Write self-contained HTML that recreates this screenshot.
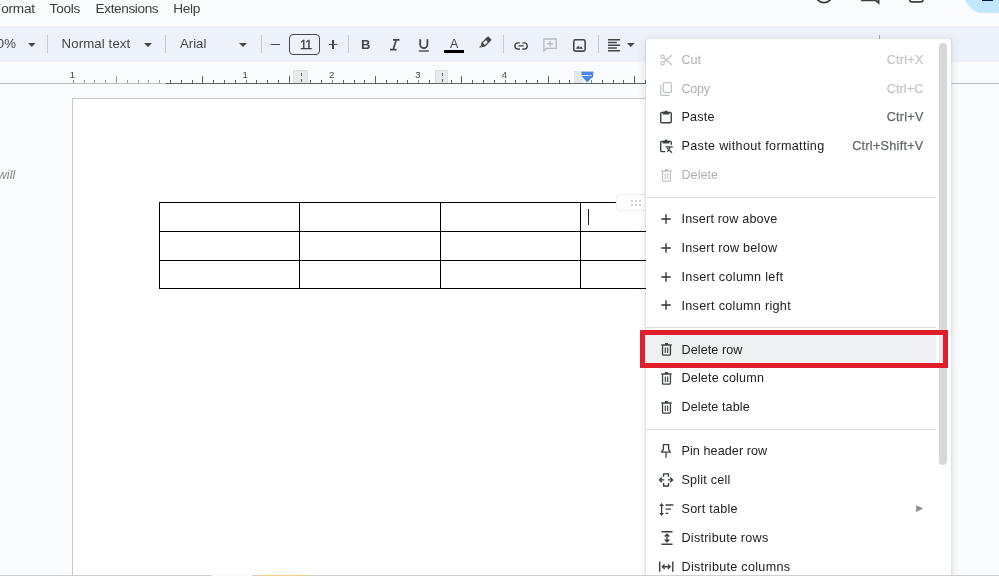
<!DOCTYPE html>
<html lang="en"><head><meta charset="utf-8"><title>Document</title>
<style>
*{margin:0;padding:0;box-sizing:border-box}
html,body{width:999px;height:576px;overflow:hidden;background:#f9fbfd;font-family:"Liberation Sans",Arial,sans-serif;}
body{position:relative}
.abs{position:absolute}
.t{position:absolute;white-space:nowrap;line-height:1}
.mb{font-size:13.6px;color:#3c4043;top:2.2px;letter-spacing:-0.25px}
.tb{font-size:13.2px;color:#444746;top:37.2px}
.sep{position:absolute;top:35px;width:1px;height:18px;background:#c7cad0}
.mi{position:absolute;left:681.5px;font-size:12.6px;color:#202124;white-space:nowrap;line-height:16px;height:16px}
.mi.dis{color:#adb0b3}
.sc{position:absolute;font-size:12.6px;color:#63676c;white-space:nowrap;line-height:16px;height:16px;text-align:left;-webkit-text-stroke:0.25px #63676c}
.sc.dis{color:#c2c4c6;-webkit-text-stroke:0.2px #c2c4c6}
.msep{position:absolute;left:646px;width:290px;height:1px;background:#dadce0}
svg{position:absolute;overflow:visible}
</style></head>
<body>
<div id="w" style="position:absolute;left:0;top:0;width:999px;height:576px;will-change:transform;overflow:hidden">
<div class="abs" style="left:0;top:0;width:999px;height:26px;background:#f9fbfd"></div>
<div class="t mb" style="left:-7.6px"><span style="letter-spacing:0.55px">F</span>ormat</div>
<div class="t mb" style="left:49.6px">Tools</div>
<div class="t mb" style="left:95.6px;letter-spacing:-0.38px">Extensions</div>
<div class="t mb" style="left:173.2px">Help</div>
<svg width="30" height="12" style="left:809px;top:0" viewBox="809 0 30 12"><circle cx="824" cy="-6" r="8.6" fill="none" stroke="#3c4043" stroke-width="1.8"/></svg>
<svg width="30" height="12" style="left:855px;top:0" viewBox="855 0 30 12"><path d="M862 -10 H878.6 V2.8 L875.4 0.3 H862 Z" fill="none" stroke="#3c4043" stroke-width="1.8"/></svg>
<svg width="30" height="12" style="left:902px;top:0" viewBox="902 0 30 12"><rect x="909.8" y="-12" width="13" height="13.8" rx="1.5" fill="none" stroke="#3c4043" stroke-width="1.8"/></svg>
<div class="abs" style="left:964px;top:-27.5px;width:80px;height:40px;border-radius:20px;background:#c2e7ff"></div>
<div class="abs" style="left:982.2px;top:-3px;width:11px;height:4.2px;background:#0b1d33"></div>
<div class="abs" style="left:-30px;top:26px;width:1060px;height:36px;background:#edf2fa"></div>
<div class="t tb" style="left:-10.5px">00%</div>
<svg width="7.6" height="3.9" style="left:27.7px;top:42.8px" viewBox="0 0 7.6 3.9"><path d="M0 0 H7.6 L3.8 3.9 Z" fill="#444746"/></svg>
<div class="sep" style="left:47px"></div>
<div class="t tb" style="left:61.6px;letter-spacing:0.12px">Normal text</div>
<svg width="8" height="4" style="left:144.3px;top:42.8px" viewBox="0 0 8 4"><path d="M0 0 H8 L4.0 4 Z" fill="#444746"/></svg>
<div class="sep" style="left:165px"></div>
<div class="t tb" style="left:180px">Arial</div>
<svg width="8" height="4" style="left:238.8px;top:42.8px" viewBox="0 0 8 4"><path d="M0 0 H8 L4.0 4 Z" fill="#444746"/></svg>
<div class="sep" style="left:261px"></div>
<div class="abs" style="left:270.8px;top:43.6px;width:9.4px;height:1.9px;background:#444746"></div>
<div class="abs" style="left:289px;top:34px;width:31px;height:20.5px;border:1.2px solid #444746;border-radius:4px"></div>
<div class="t" style="left:289px;width:31px;text-align:center;top:38.6px;font-size:12.4px;color:#3c4043;letter-spacing:-0.9px;text-indent:2.2px;-webkit-text-stroke:0.3px #3c4043">11</div>
<div class="abs" style="left:328.6px;top:43.8px;width:8.8px;height:1.7px;background:#444746"></div>
<div class="abs" style="left:332.15px;top:40.2px;width:1.7px;height:8.8px;background:#444746"></div>
<div class="sep" style="left:348px"></div>
<div class="t" style="left:361px;top:38px;font-size:13px;font-weight:bold;color:#444746">B</div>
<svg width="12" height="12" style="left:389px;top:39px" viewBox="0 0 12 12"><path d="M4 0.8 H10.5 M1 10.6 H7.5 M7.3 0.8 L4.2 10.6" fill="none" stroke="#444746" stroke-width="1.7"/></svg>
<svg width="12" height="14" style="left:418px;top:38.5px" viewBox="0 0 12 14"><path d="M2.2 0.3 V5.5 a3.6 3.6 0 0 0 7.2 0 V0.3" fill="none" stroke="#444746" stroke-width="1.8"/><path d="M0.8 12 H10.8" stroke="#444746" stroke-width="1.4"/></svg>
<div class="t" style="left:450.1px;top:37.7px;font-size:12.4px;color:#444746">A</div>
<div class="abs" style="left:443.5px;top:49.6px;width:20px;height:3px;background:#000"></div>
<svg width="14" height="14" style="left:477.7px;top:35.6px" viewBox="0 0 14 14"><g transform="translate(7 6.9) rotate(45) scale(0.96)" fill="#444746"><rect x="-2.7" y="-7.3" width="5.4" height="4.2" rx="0.9"/><rect x="-2.05" y="-3.4" width="4.1" height="5.6" fill="none" stroke="#444746" stroke-width="1.3"/><path d="M-2.7 2.4 H2.7 L1.3 5 H-1.3 Z"/><path d="M-1.3 5.4 H1.3 L-1.3 7.6 Z"/></g></svg>
<div class="sep" style="left:503px"></div>
<svg width="14.2" height="7.9" style="left:513.7px;top:41.7px" viewBox="0 0 16 9"><path d="M6.6 1 H4.4 a3.45 3.45 0 0 0 0 6.9 H6.6 M9.4 1 H11.6 a3.45 3.45 0 0 1 0 6.9 H9.4 M5 4.45 H11" fill="none" stroke="#444746" stroke-width="1.6"/></svg>
<svg width="16" height="15" style="left:542px;top:37.9px" viewBox="0 0 16 15"><path d="M1.9 1 H14.3 V10.4 H4.6 L1.9 12.9 Z" fill="none" stroke="#b7bbc2" stroke-width="1.4"/><path d="M8.1 3 V8.6 M5.3 5.8 H10.9" stroke="#b7bbc2" stroke-width="1.4"/></svg>
<svg width="12.9" height="12.9" style="left:573.2px;top:38.7px" viewBox="0 0 14 14"><rect x="0.85" y="0.85" width="12.3" height="12.3" rx="1.8" fill="none" stroke="#444746" stroke-width="1.7"/><path d="M3 10.6 L5.6 7.4 L7.4 9.4 L8.8 7.8 L11 10.6 Z" fill="#444746"/></svg>
<div class="sep" style="left:598px"></div>
<svg width="13" height="13" style="left:608.1px;top:38.7px" viewBox="0 0 13 13"><path d="M0 0.7 H12.1 M0 3.45 H8.8 M0 6.2 H12.1 M0 8.95 H8.8 M0 11.7 H12.1" stroke="#444746" stroke-width="1.35"/></svg>
<svg width="7.6" height="3.9" style="left:626.7px;top:43.1px" viewBox="0 0 7.6 3.9"><path d="M0 0 H7.6 L3.8 3.9 Z" fill="#444746"/></svg>
<div class="abs" style="left:879px;top:35px;width:1px;height:10px;background:#a0a4aa"></div>
<div class="abs" style="left:0;top:62px;width:999px;height:21px;background:#f9fbfd"></div>
<div class="abs" style="left:0;top:82.5px;width:999px;height:1px;background:#bcbec2"></div>
<div class="abs" style="left:166px;top:82.5px;width:600px;height:1px;background:#5f6368"></div>
<div class="abs" style="left:83.6px;top:79.8px;width:1px;height:2.8px;background:#9aa0a6"></div><div class="abs" style="left:94.4px;top:79.8px;width:1px;height:2.8px;background:#9aa0a6"></div><div class="abs" style="left:105.2px;top:79.8px;width:1px;height:2.8px;background:#9aa0a6"></div><div class="abs" style="left:116.0px;top:76.1px;width:1px;height:6.5px;background:#9aa0a6"></div><div class="abs" style="left:126.8px;top:79.8px;width:1px;height:2.8px;background:#9aa0a6"></div><div class="abs" style="left:137.6px;top:79.8px;width:1px;height:2.8px;background:#9aa0a6"></div><div class="abs" style="left:148.4px;top:79.8px;width:1px;height:2.8px;background:#9aa0a6"></div><div class="abs" style="left:170.0px;top:79.8px;width:1px;height:2.8px;background:#5f6368"></div><div class="abs" style="left:180.8px;top:79.8px;width:1px;height:2.8px;background:#5f6368"></div><div class="abs" style="left:191.5px;top:79.8px;width:1px;height:2.8px;background:#5f6368"></div><div class="abs" style="left:202.3px;top:76.1px;width:1px;height:6.5px;background:#5f6368"></div><div class="abs" style="left:213.1px;top:79.8px;width:1px;height:2.8px;background:#5f6368"></div><div class="abs" style="left:223.9px;top:79.8px;width:1px;height:2.8px;background:#5f6368"></div><div class="abs" style="left:234.7px;top:79.8px;width:1px;height:2.8px;background:#5f6368"></div><div class="abs" style="left:256.3px;top:79.8px;width:1px;height:2.8px;background:#5f6368"></div><div class="abs" style="left:267.1px;top:79.8px;width:1px;height:2.8px;background:#5f6368"></div><div class="abs" style="left:277.9px;top:79.8px;width:1px;height:2.8px;background:#5f6368"></div><div class="abs" style="left:288.7px;top:76.1px;width:1px;height:6.5px;background:#5f6368"></div><div class="abs" style="left:299.5px;top:79.8px;width:1px;height:2.8px;background:#5f6368"></div><div class="abs" style="left:310.3px;top:79.8px;width:1px;height:2.8px;background:#5f6368"></div><div class="abs" style="left:321.1px;top:79.8px;width:1px;height:2.8px;background:#5f6368"></div><div class="abs" style="left:342.7px;top:79.8px;width:1px;height:2.8px;background:#5f6368"></div><div class="abs" style="left:353.5px;top:79.8px;width:1px;height:2.8px;background:#5f6368"></div><div class="abs" style="left:364.3px;top:79.8px;width:1px;height:2.8px;background:#5f6368"></div><div class="abs" style="left:375.1px;top:76.1px;width:1px;height:6.5px;background:#5f6368"></div><div class="abs" style="left:385.9px;top:79.8px;width:1px;height:2.8px;background:#5f6368"></div><div class="abs" style="left:396.7px;top:79.8px;width:1px;height:2.8px;background:#5f6368"></div><div class="abs" style="left:407.4px;top:79.8px;width:1px;height:2.8px;background:#5f6368"></div><div class="abs" style="left:429.0px;top:79.8px;width:1px;height:2.8px;background:#5f6368"></div><div class="abs" style="left:439.8px;top:79.8px;width:1px;height:2.8px;background:#5f6368"></div><div class="abs" style="left:450.6px;top:79.8px;width:1px;height:2.8px;background:#5f6368"></div><div class="abs" style="left:461.4px;top:76.1px;width:1px;height:6.5px;background:#5f6368"></div><div class="abs" style="left:472.2px;top:79.8px;width:1px;height:2.8px;background:#5f6368"></div><div class="abs" style="left:483.0px;top:79.8px;width:1px;height:2.8px;background:#5f6368"></div><div class="abs" style="left:493.8px;top:79.8px;width:1px;height:2.8px;background:#5f6368"></div><div class="abs" style="left:515.4px;top:79.8px;width:1px;height:2.8px;background:#5f6368"></div><div class="abs" style="left:526.2px;top:79.8px;width:1px;height:2.8px;background:#5f6368"></div><div class="abs" style="left:537.0px;top:79.8px;width:1px;height:2.8px;background:#5f6368"></div><div class="abs" style="left:547.8px;top:76.1px;width:1px;height:6.5px;background:#5f6368"></div><div class="abs" style="left:558.6px;top:79.8px;width:1px;height:2.8px;background:#5f6368"></div><div class="abs" style="left:569.4px;top:79.8px;width:1px;height:2.8px;background:#5f6368"></div><div class="abs" style="left:580.2px;top:79.8px;width:1px;height:2.8px;background:#5f6368"></div><div class="abs" style="left:601.8px;top:79.8px;width:1px;height:2.8px;background:#5f6368"></div><div class="abs" style="left:612.5px;top:79.8px;width:1px;height:2.8px;background:#5f6368"></div><div class="abs" style="left:623.3px;top:79.8px;width:1px;height:2.8px;background:#5f6368"></div><div class="abs" style="left:634.1px;top:76.1px;width:1px;height:6.5px;background:#5f6368"></div><div class="abs" style="left:644.9px;top:79.8px;width:1px;height:2.8px;background:#5f6368"></div>
<div class="abs" style="left:72.8px;top:80px;width:1px;height:2.6px;background:#80868b"></div>
<div class="t" style="left:67.5px;width:10px;text-align:center;top:70.3px;font-size:9.6px;color:#444746">1</div>
<div class="abs" style="left:245.5px;top:80px;width:1px;height:2.6px;background:#80868b"></div>
<div class="t" style="left:240.2px;width:10px;text-align:center;top:70.3px;font-size:9.6px;color:#444746">1</div>
<div class="abs" style="left:331.9px;top:80px;width:1px;height:2.6px;background:#80868b"></div>
<div class="t" style="left:326.6px;width:10px;text-align:center;top:70.3px;font-size:9.6px;color:#444746">2</div>
<div class="abs" style="left:418.2px;top:80px;width:1px;height:2.6px;background:#80868b"></div>
<div class="t" style="left:412.9px;width:10px;text-align:center;top:70.3px;font-size:9.6px;color:#444746">3</div>
<div class="abs" style="left:504.6px;top:80px;width:1px;height:2.6px;background:#80868b"></div>
<div class="t" style="left:499.3px;width:10px;text-align:center;top:70.3px;font-size:9.6px;color:#444746">4</div>
<div class="abs" style="left:591.0px;top:80px;width:1px;height:2.6px;background:#80868b"></div>
<div class="t" style="left:585.7px;width:10px;text-align:center;top:70.3px;font-size:9.6px;color:#444746">5</div>
<div class="abs" style="left:159.2px;top:79.8px;width:1px;height:2.8px;background:#9aa0a6"></div>
<div class="abs" style="left:293.1px;top:70px;width:15px;height:12.5px;background:#e9eaec;border:1px solid #dcdee1;border-bottom:none"></div>
<div class="abs" style="left:301.20000000000005px;top:72.5px;width:0;height:9.5px;border-left:1px dashed #5f6368"></div>
<div class="abs" style="left:434.5px;top:70px;width:13.2px;height:12.5px;background:#e9eaec;border:1px solid #dcdee1;border-bottom:none"></div>
<div class="abs" style="left:441.70000000000005px;top:72.5px;width:0;height:9.5px;border-left:1px dashed #5f6368"></div>
<div class="abs" style="left:574px;top:70.5px;width:9px;height:12px;background:#e6e7e9"></div>
<svg width="16" height="14" style="left:580.6px;top:70.8px" viewBox="0 0 16 14"><rect x="0.5" y="0.6" width="11.8" height="3.6" fill="#4a86e8"/><path d="M0.5 5 H12.3 L6.2 11.6 Z" fill="#4a86e8"/></svg>
<div class="abs" style="left:72px;top:97.5px;width:734px;height:500px;background:#fff;border:1px solid #c8c8c8"></div>
<div class="t" style="left:-12.2px;top:169px;letter-spacing:0.1px;font-size:12.4px;font-style:italic;color:#80868b">it will</div>
<div class="abs" style="left:159px;top:202px;width:563px;height:1px;background:#000"></div>
<div class="abs" style="left:159px;top:231px;width:563px;height:1px;background:#000"></div>
<div class="abs" style="left:159px;top:260px;width:563px;height:1px;background:#000"></div>
<div class="abs" style="left:159px;top:288px;width:563px;height:1px;background:#000"></div>
<div class="abs" style="left:159px;top:202px;width:1px;height:87px;background:#000"></div>
<div class="abs" style="left:299px;top:202px;width:1px;height:87px;background:#000"></div>
<div class="abs" style="left:440px;top:202px;width:1px;height:87px;background:#000"></div>
<div class="abs" style="left:580px;top:202px;width:1px;height:87px;background:#000"></div>
<div class="abs" style="left:721px;top:202px;width:1px;height:87px;background:#000"></div>
<div class="abs" style="left:587.8px;top:209px;width:1.2px;height:16px;background:#222"></div>
<div class="abs" style="left:615.5px;top:194.2px;width:45px;height:16.4px;border-radius:4px;background:#fff;border:1px solid #eef0f2;box-shadow:0 0 2px rgba(0,0,0,.06)"></div>
<div class="abs" style="left:631.2px;top:200.2px;width:2.2px;height:2.2px;background:#c3c6ca;border-radius:1px"></div><div class="abs" style="left:635.2px;top:200.2px;width:2.2px;height:2.2px;background:#c3c6ca;border-radius:1px"></div><div class="abs" style="left:639.2px;top:200.2px;width:2.2px;height:2.2px;background:#c3c6ca;border-radius:1px"></div><div class="abs" style="left:631.2px;top:203.79999999999998px;width:2.2px;height:2.2px;background:#c3c6ca;border-radius:1px"></div><div class="abs" style="left:635.2px;top:203.79999999999998px;width:2.2px;height:2.2px;background:#c3c6ca;border-radius:1px"></div><div class="abs" style="left:639.2px;top:203.79999999999998px;width:2.2px;height:2.2px;background:#c3c6ca;border-radius:1px"></div>
<div class="abs" style="left:646px;top:39px;width:304.5px;height:560px;background:#fff;border-radius:3px;box-shadow:0 1px 2px rgba(60,64,67,.22),0 2px 6px 2px rgba(60,64,67,.10)"></div>
<div class="abs" style="left:939.1px;top:42.6px;width:7.8px;height:422px;border-radius:3.9px;background:#d8d8d8"></div>
<div class="abs" style="left:646px;top:334.4px;width:290.3px;height:28.8px;background:#eff0f2"></div><div class="abs" style="left:939.1px;top:334px;width:4px;height:29.5px;background:#e6e6ec"></div>
<div class="mi dis" style="top:51.9px;letter-spacing:-0.055px">Cut</div>
<div class="sc dis" style="top:51.9px;left:886.8px;letter-spacing:0.231px">Ctrl+X</div>
<svg width="13" height="12" style="left:659.9px;top:54.1px" viewBox="0 0 13 12"><circle cx="2.5" cy="2.7" r="1.75" fill="none" stroke="#c3c5c8" stroke-width="1.2"/><circle cx="2.5" cy="9.3" r="1.75" fill="none" stroke="#c3c5c8" stroke-width="1.2"/><path d="M4 4 L12 11 M4 8 L12 1" stroke="#c3c5c8" stroke-width="1.3" fill="none"/></svg>
<div class="mi dis" style="top:80.7px;letter-spacing:-0.302px">Copy</div>
<div class="sc dis" style="top:80.7px;left:886.8px;letter-spacing:0.091px">Ctrl+C</div>
<svg width="12" height="14" style="left:659.9px;top:81.5px" viewBox="0 0 12 14"><rect x="3.4" y="0.7" width="8" height="9.8" rx="1" fill="none" stroke="#c3c5c8" stroke-width="1.3"/><path d="M0.8 2.8 V12.5 a0.8 0.8 0 0 0 .8 .8 H9.4" fill="none" stroke="#c3c5c8" stroke-width="1.3"/></svg>
<div class="mi" style="top:108.8px;letter-spacing:0.195px">Paste</div>
<div class="sc" style="top:108.8px;left:886.8px;letter-spacing:0.231px">Ctrl+V</div>
<svg width="12" height="14" style="left:660px;top:109.8px" viewBox="0 0 12 14"><rect x="0.75" y="2.4" width="10.5" height="10.4" rx="1" fill="none" stroke="#3c4043" stroke-width="1.4"/><path d="M2.6 4.4 V2.3 a0.6 0.6 0 0 1 .6 -.6 H4.5 a1.55 1.55 0 0 1 3 0 H8.8 a.6 .6 0 0 1 .6 .6 V4.4 Z" fill="#3c4043"/></svg>
<div class="mi" style="top:138.3px;letter-spacing:0.330px">Paste without formatting</div>
<div class="sc" style="top:138.3px;left:852.2px;letter-spacing:0.290px">Ctrl+Shift+V</div>
<svg width="13" height="14" style="left:660px;top:139.3px" viewBox="0 0 13 14"><path d="M5.2 12.6 H1.7 a1 1 0 0 1 -1 -1 V3.4 a1 1 0 0 1 1 -1 H10.3 a1 1 0 0 1 1 1 V5.8" fill="none" stroke="#3c4043" stroke-width="1.4"/><path d="M2.6 4.4 V2.3 a0.6 0.6 0 0 1 .6 -.6 H4.5 a1.55 1.55 0 0 1 3 0 H8.8 a.6 .6 0 0 1 .6 .6 V4.4 Z" fill="#3c4043"/><path d="M5.6 7.8 H12.8 M7 9 L12 13.8 M10.2 8.2 L7.4 13" fill="none" stroke="#3c4043" stroke-width="1.2"/></svg>
<div class="mi dis" style="top:167.1px;letter-spacing:0.019px">Delete</div>
<svg width="11" height="13" style="left:661.1px;top:168.7px" viewBox="0 0 11 13"><path d="M4 0.7 H7 M0.3 2 H10.7" stroke="#c3c5c8" stroke-width="1.3" fill="none"/><path d="M1.55 2.6 V11.2 a1 1 0 0 0 1 1 H8.45 a1 1 0 0 0 1 -1 V2.6" stroke="#c3c5c8" stroke-width="1.3" fill="none"/><path d="M4.3 4.6 V10 M6.7 4.6 V10" stroke="#c3c5c8" stroke-width="1.15" fill="none"/></svg>
<div class="mi" style="top:211.2px;letter-spacing:0.179px">Insert row above</div>
<svg width="10" height="10" style="left:661.1px;top:213.9px" viewBox="0 0 10 10"><path d="M5 0.3 V9.7 M0.3 5 H9.7" stroke="#2f3134" stroke-width="1.35" fill="none"/></svg>
<div class="mi" style="top:240.0px;letter-spacing:0.253px">Insert row below</div>
<svg width="10" height="10" style="left:661.1px;top:242.7px" viewBox="0 0 10 10"><path d="M5 0.3 V9.7 M0.3 5 H9.7" stroke="#2f3134" stroke-width="1.35" fill="none"/></svg>
<div class="mi" style="top:268.8px;letter-spacing:0.329px">Insert column left</div>
<svg width="10" height="10" style="left:661.1px;top:271.5px" viewBox="0 0 10 10"><path d="M5 0.3 V9.7 M0.3 5 H9.7" stroke="#2f3134" stroke-width="1.35" fill="none"/></svg>
<div class="mi" style="top:297.6px;letter-spacing:0.311px">Insert column right</div>
<svg width="10" height="10" style="left:661.1px;top:300.3px" viewBox="0 0 10 10"><path d="M5 0.3 V9.7 M0.3 5 H9.7" stroke="#2f3134" stroke-width="1.35" fill="none"/></svg>
<div class="mi" style="top:341.7px;letter-spacing:0.077px">Delete row</div>
<svg width="11" height="13" style="left:661.1px;top:343.3px" viewBox="0 0 11 13"><path d="M4 0.7 H7 M0.3 2 H10.7" stroke="#3c4043" stroke-width="1.3" fill="none"/><path d="M1.55 2.6 V11.2 a1 1 0 0 0 1 1 H8.45 a1 1 0 0 0 1 -1 V2.6" stroke="#3c4043" stroke-width="1.3" fill="none"/><path d="M4.3 4.6 V10 M6.7 4.6 V10" stroke="#3c4043" stroke-width="1.15" fill="none"/></svg>
<div class="mi" style="top:369.8px;letter-spacing:0.157px">Delete column</div>
<svg width="11" height="13" style="left:661.1px;top:372.1px" viewBox="0 0 11 13"><path d="M4 0.7 H7 M0.3 2 H10.7" stroke="#3c4043" stroke-width="1.3" fill="none"/><path d="M1.55 2.6 V11.2 a1 1 0 0 0 1 1 H8.45 a1 1 0 0 0 1 -1 V2.6" stroke="#3c4043" stroke-width="1.3" fill="none"/><path d="M4.3 4.6 V10 M6.7 4.6 V10" stroke="#3c4043" stroke-width="1.15" fill="none"/></svg>
<div class="mi" style="top:399.3px;letter-spacing:0.089px">Delete table</div>
<svg width="11" height="13" style="left:661.1px;top:400.9px" viewBox="0 0 11 13"><path d="M4 0.7 H7 M0.3 2 H10.7" stroke="#3c4043" stroke-width="1.3" fill="none"/><path d="M1.55 2.6 V11.2 a1 1 0 0 0 1 1 H8.45 a1 1 0 0 0 1 -1 V2.6" stroke="#3c4043" stroke-width="1.3" fill="none"/><path d="M4.3 4.6 V10 M6.7 4.6 V10" stroke="#3c4043" stroke-width="1.15" fill="none"/></svg>
<div class="mi" style="top:443.4px;letter-spacing:0.075px">Pin header row</div>
<svg width="10" height="13" style="left:661.4px;top:444.1px" viewBox="0 0 10 13"><path d="M2.4 0.7 H7.6 V5.6 L9.2 7.6 V8.2 H0.8 V7.6 L2.4 5.6 Z" fill="none" stroke="#3c4043" stroke-width="1.3"/><path d="M5 8.4 V13.8" stroke="#3c4043" stroke-width="1.3"/></svg>
<div class="mi" style="top:472.2px;letter-spacing:0.199px">Split cell</div>
<svg width="14" height="14" style="left:659.1px;top:473.2px" viewBox="0 0 14 14"><path d="M4.6 3.8 V0.8 H9.5 V3.8 M4.6 10 V13 H9.5 V10 M0.5 6.9 H5.3 M13.6 6.9 H8.8 M2.9 4.5 L0.5 6.9 L2.9 9.3 M11.2 4.5 L13.6 6.9 L11.2 9.3" fill="none" stroke="#3c4043" stroke-width="1.35"/></svg>
<div class="mi" style="top:501.0px;letter-spacing:0.233px">Sort table</div>
<svg width="15" height="13" style="left:659.2px;top:502.8px" viewBox="0 0 15 13"><path d="M2.6 1.6 V11.4" stroke="#3c4043" stroke-width="1.3"/><path d="M2.6 0 L5 3 H0.2 Z M2.6 13 L5 10 H0.2 Z" fill="#3c4043"/><path d="M6.6 2 H14.4 M6.6 6.2 H12 M6.6 10.4 H9.4" stroke="#3c4043" stroke-width="1.3"/></svg>
<svg width="8" height="8" style="left:915.6px;top:505.1px" viewBox="0 0 8 8"><path d="M0.2 0.3 L7.2 3.6 L0.2 6.9 Z" fill="#8a8d91"/></svg>
<div class="mi" style="top:529.8px;letter-spacing:0.244px">Distribute rows</div>
<svg width="12" height="15" style="left:660.5px;top:530.5px" viewBox="0 0 12 15"><path d="M0.5 0.7 H11.5 M0.5 13.3 H11.5" stroke="#3c4043" stroke-width="1.4"/><path d="M6 3.4 V10.6 M3.7 5.5 L6 3.2 L8.3 5.5 M3.7 8.5 L6 10.8 L8.3 8.5" fill="none" stroke="#3c4043" stroke-width="1.35"/></svg>
<div class="mi" style="top:558.6px;letter-spacing:0.289px">Distribute columns</div>
<svg width="15" height="12" style="left:658.8px;top:560.7px" viewBox="0 0 15 12"><path d="M0.7 0.6 V10.8 M13.8 0.6 V10.8" stroke="#3c4043" stroke-width="1.4"/><path d="M3.5 5.7 H11 M5.6 3.5 L3.4 5.7 L5.6 7.9 M8.9 3.5 L11.1 5.7 L8.9 7.9" fill="none" stroke="#3c4043" stroke-width="1.35"/></svg>
<div class="msep" style="top:196.6px"></div>
<div class="msep" style="top:327.0px"></div>
<div class="msep" style="top:428.8px"></div>
<div class="abs" style="left:640.1px;top:329.8px;width:307.9px;height:37.8px;border:5px solid #e01d2c"></div>
<div class="abs" style="left:0;top:574.7px;width:999px;height:1.3px;background:#cfcfcf"></div>
<div class="abs" style="left:212px;top:574.6px;width:40px;height:1.4px;background:#fafafa"></div>
<div class="abs" style="left:260px;top:574.5px;width:48px;height:1.5px;background:#f5cc80"></div>
</div>
</body></html>
